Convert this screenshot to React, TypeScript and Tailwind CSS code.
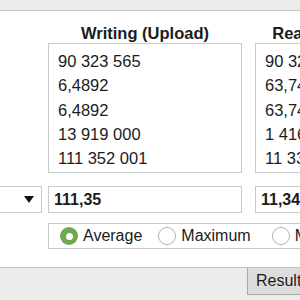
import React from 'react';

const font = { fontFamily: '"Liberation Sans", Arial, sans-serif' };

const writing = ['90 323 565', '6,4892', '6,4892', '13 919 000', '111 352 001'];
const reading = ['90 323 565', '63,7412', '63,7412', '1 416 000', '11 335 120'];

function ValueList({ items }: { items: string[] }) {
  return (
    <div className="w-[194px] h-[130px] shrink-0 border border-[#c9c9c9] bg-white pl-[9px] pt-[5px] text-[16.5px] leading-[24.25px] text-[#1c1c1c]">
      {items.map((v, i) => (
        <div key={i} className="whitespace-nowrap">{v}</div>
      ))}
    </div>
  );
}

function Radio({ label, checked }: { label: string; checked?: boolean }) {
  return (
    <div className="flex items-center gap-[5px] shrink-0">
      {checked ? (
        <div className="w-[18px] h-[18px] rounded-full bg-[#6ea94e] flex items-center justify-center">
          <div className="w-[7px] h-[7px] rounded-full bg-white" />
        </div>
      ) : (
        <div className="w-[18px] h-[18px] rounded-full border border-[#b4b4b4] bg-white" />
      )}
      <span className="text-[16px] text-[#1c1c1c] whitespace-nowrap">{label}</span>
    </div>
  );
}

export default function App() {
  return (
    <div className="w-[300px] h-[300px] overflow-hidden bg-[#ececec] flex flex-col" style={font}>
      {/* Toolbar strip */}
      <div className="h-[11px] shrink-0 bg-[#ececec] border-b border-[#c6c6c6]" />

      {/* Main panel */}
      <div className="h-[256px] shrink-0 bg-white flex flex-col">
        {/* Titles */}
        <div className="flex pl-[48px] pt-[12px] h-[32px] items-center shrink-0">
          <div className="w-[194px] shrink-0 text-center font-bold text-[16.5px] text-[#1c1c1c] whitespace-nowrap">Writing (Upload)</div>
          <div className="w-[194px] ml-[13px] shrink-0 text-center font-bold text-[16.5px] text-[#1c1c1c] whitespace-nowrap">Reading (Download)</div>
        </div>

        {/* Lists */}
        <div className="flex pl-[48px] shrink-0">
          <ValueList items={writing} />
          <div className="ml-[13px] shrink-0">
            <ValueList items={reading} />
          </div>
        </div>

        {/* Fields */}
        <div className="flex mt-[13px] h-[27px] shrink-0">
          <div className="w-[42px] shrink-0 h-full border-y border-r border-[#c9c9c9] flex items-center justify-end pr-[7px]">
            <svg width="10" height="7" viewBox="0 0 10 7">
              <path d="M0 0 H10 L5 7 Z" fill="#111" />
            </svg>
          </div>
          <div className="w-[194px] shrink-0 ml-[6px] h-full border border-[#c9c9c9] flex items-center pl-[5px] font-bold text-[16px] text-[#1c1c1c]">111,35</div>
          <div className="w-[194px] shrink-0 ml-[13px] h-full border border-[#c9c9c9] flex items-center pl-[5px] font-bold text-[16px] text-[#1c1c1c]">11,34</div>
        </div>

        {/* Mode radios */}
        <div className="ml-[48px] mt-[10px] h-[26px] w-[320px] shrink-0 border border-[#c9c9c9] flex items-center pl-[11px]">
          <Radio label="Average" checked />
          <div className="ml-[16px] shrink-0"><Radio label="Maximum" /></div>
          <div className="ml-[21px] shrink-0"><Radio label="Minimum" /></div>
        </div>
      </div>

      {/* Bottom bar */}
      <div className="flex-1 border-t border-[#c2c2c2] bg-[#ececec] flex">
        <div className="ml-[247px] w-[80px] h-[27px] shrink-0 border-l border-b border-[#a9a9a9] bg-[#dddddd] pl-[8px] flex items-center text-[16px] text-[#1c1c1c] whitespace-nowrap">Results</div>
      </div>
    </div>
  );
}
